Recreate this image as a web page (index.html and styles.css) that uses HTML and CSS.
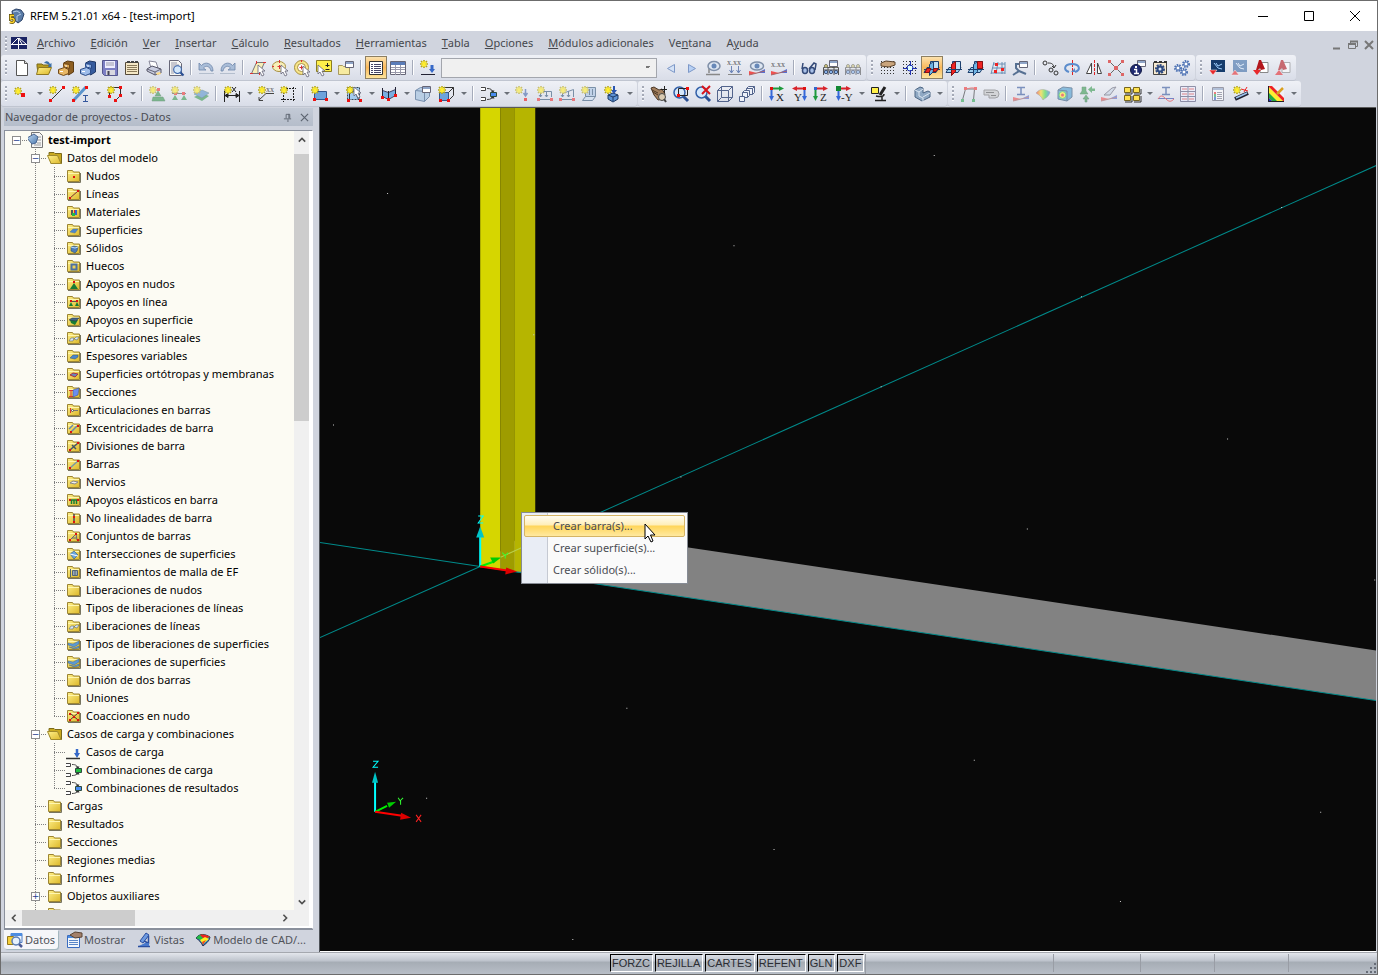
FILE: index.html
```html
<!DOCTYPE html>
<html lang="es">
<head>
<meta charset="utf-8">
<title>RFEM 5.21.01 x64 - [test-import]</title>
<link rel="stylesheet" href="styles.css">
</head>
<body>
<svg class="defs" aria-hidden="true">
  <defs>
    <linearGradient id="gold" x1="0" y1="0" x2="1" y2="1"><stop offset="0" stop-color="#fff08a"/><stop offset="1" stop-color="#dcb82a"/></linearGradient>
    <linearGradient id="steel" x1="0" y1="0" x2="1" y2="1"><stop offset="0" stop-color="#c4dcf4"/><stop offset="1" stop-color="#4a78ae"/></linearGradient>
    <linearGradient id="rainbow" x1="0" y1="0" x2="1" y2="0"><stop offset="0" stop-color="#e33"/><stop offset=".35" stop-color="#fd2"/><stop offset=".65" stop-color="#4d4"/><stop offset="1" stop-color="#37e"/></linearGradient>
    <g id="star"><path d="M4 0v8M0 4h8M1 1l6 6M7 1L1 7" stroke="#b3a41c" stroke-width="1.600"/><path d="M4 1v6M1 4h6M2 2l4 4M6 2L2 6" stroke="#ffee30" stroke-width="1.200"/></g>
    <g id="cursor"><path d="M0 0v9l2-2 2 4 2-1-2-4h3z" fill="#fff" stroke="#667" stroke-width=".8"/></g>
    <g id="win"><path d="M.5.5h8v6h-8z" fill="#fff" stroke="#667"/><path d="M1 1h7v2H1z" fill="#8fa5c8"/></g>
    <g id="lens"><path d="M10 10l5 5" stroke="#2a4f93" stroke-width="3"/><circle cx="6.500" cy="6.500" r="5.500" fill="#d5e8fb" stroke="#3360a8" stroke-width="1.500"/></g>
    <g id="grid"><path d="M1 1.500h15M1 4.500h15M1 7.500h15M1 10.500h15M1 13.500h15" stroke="#333" stroke-dasharray="1 2"/></g>
    <g id="planes"><path d="M3 7.500h12l-3 5H0z" fill="#9fd0f0" stroke="#1c3f6e"/><path d="M6.500 1.500h8v8h-8z" fill="#bfe0f6" stroke="#1c3f6e"/><path d="M5.500 4.500l4-3v10l-4 4z" fill="#6fb4e4" stroke="#1c3f6e"/><path d="M0 9.500h16" stroke="#1c3f6e"/></g>
    <g id="truss"><path d="M.5 15V7.500h15V15M1 10h14M5 8v7M11 8v7" fill="none" stroke="#555"/><circle cx="3" cy="12" r="1.700" fill="#89b4ea" stroke="#457"/><circle cx="8" cy="12" r="1.700" fill="#89b4ea" stroke="#457"/><circle cx="13" cy="12" r="1.700" fill="#89b4ea" stroke="#457"/><circle cx="3" cy="6" r="1.500" fill="#e8d880" stroke="#776"/><circle cx="8" cy="6" r="1.500" fill="#e8d880" stroke="#776"/><circle cx="13" cy="6" r="1.500" fill="#e8d880" stroke="#776"/></g>
    <g id="wedge"><path d="M0 15V11L8 13z" fill="#f05050"/><path d="M8 13l8-4v4z" fill="#5470d8"/><path d="M0 15l16-4" stroke="#a66"/></g>
    <symbol id="folder" viewBox="0 0 16 16"><path d="M1.500 4V2.500h5l1 1.500h6v9.500h-12z" fill="url(#gold)" stroke="#9c8532"/><path d="M2 14.500h12.500V5" fill="none" stroke="#77745f"/><path d="M2 5.500h11" stroke="#fff6ae"/></symbol>
    <symbol id="open" viewBox="0 0 16 16"><path d="M2 4.500V2.500h5l1 1h6.500v10H4z" fill="#c9a91e" stroke="#7b6a1a"/><path d="M.5 5.500h10l3.500 8H4z" fill="url(#gold)" stroke="#a08a2c"/></symbol>
    <symbol id="case" viewBox="0 0 16 16"><path d="M0 14.500h14" stroke="#333" stroke-width="1.500"/><path d="M11 5v5" stroke="#3568c8" stroke-width="2.500"/><path d="M8 9h6l-3 5z" fill="#3568c8"/></symbol>
    <symbol id="combo" viewBox="0 0 16 16"><path d="M-.5 1.500h5v3h-5zM-.5 11.500h5v3h-5z" fill="#fff" stroke="#444"/><path d="M6 2.500c4 0 5 1 6 4M6 13.500c4 0 5-1 6-4" fill="none" stroke="#444"/><path d="M9.500 4.500h4L12 7zM9.500 12.500h4L12 9z" fill="#333"/><path d="M9.500 6.500h6v4h-6z" fill="currentColor" stroke="#2c4a3c"/></symbol>
    <symbol id="model" viewBox="0 0 16 16"><path d="M3.500.500h8l3 3v12h-11z" fill="#f5f5f5" stroke="#777"/><path d="M9 5h4M9 8h4M9 11h4M6 13h7" stroke="#999"/><path d="M-1 6l7-4 4 3-2 6-4 1z" fill="url(#steel)" stroke="#476490"/></symbol>
  </defs>
</svg>

<header class="titlebar">
  <svg class="app" viewBox="0 0 16 16"><path d="M4 3l4-2 5 1 3 4-2 6-4 3-5-4z" fill="#5a7ca8" stroke="#2b4268"/><path d="M5 4l4-1 3 2M9 8l4-2M9 8v5" stroke="#b7cee8" fill="none"/><path d="M6 7.500H2.500V11c3-1 4 0 3.500 2-.5 1.500-2 2-4 1" fill="none" stroke="#5b4d10" stroke-width="3"/><path d="M6 7.500H2.500V11c3-1 4 0 3.500 2-.5 1.500-2 2-4 1" fill="none" stroke="#ffd52c" stroke-width="1.500"/></svg>
  <h1>RFEM 5.21.01 x64 - [test-import]</h1>
  <div class="winbtns">
    <button aria-label="Minimizar"><svg viewBox="0 0 10 10"><path d="M0 5.500h10" stroke="#000"/></svg></button>
    <button aria-label="Maximizar"><svg viewBox="0 0 10 10"><path d="M.5.5h9v9h-9z" fill="none" stroke="#000"/></svg></button>
    <button aria-label="Cerrar"><svg viewBox="0 0 10 10"><path d="M0 0l10 10M10 0L0 10" stroke="#000"/></svg></button>
  </div>
</header>

<nav class="menubar">
  <i class="grip"></i>
  <svg class="doc" viewBox="0 0 16 12"><path d="M0 0h16v12H0z" fill="#1b2464"/><path d="M0 7.500h16M7.500 1v11M7 1L1 7M8 1l7 6M8 2l3 5" stroke="#fff" fill="none"/></svg>
  <button><u>A</u>rchivo</button><button><u>E</u>dición</button><button><u>V</u>er</button><button><u>I</u>nsertar</button><button><u>C</u>álculo</button><button><u>R</u>esultados</button><button><u>H</u>erramientas</button><button><u>T</u>abla</button><button><u>O</u>pciones</button><button><u>M</u>ódulos adicionales</button><button>Ve<u>n</u>tana</button><button>A<u>y</u>uda</button>
  <div class="childbtns">
    <button aria-label="Minimizar documento"><svg viewBox="0 0 10 10"><path d="M1 8.500h7" stroke="#777" stroke-width="2"/></svg></button>
    <button aria-label="Restaurar documento"><svg viewBox="0 0 10 10"><path d="M2.500 3V1.500h7v5H8M.5 3.500h7v5h-7z" fill="none" stroke="#777"/><path d="M0 4h8M2 1.500h8" stroke="#777" stroke-width="2"/></svg></button>
    <button aria-label="Cerrar documento"><svg viewBox="0 0 10 10"><path d="M1 1l8 8M9 1L1 9" stroke="#777" stroke-width="2"/></svg></button>
  </div>
</nav>

<div class="toolrow">
  <div class="toolbar" role="toolbar"><i class="grip"></i>
    <button class="tb" aria-label="Nuevo"><svg viewBox="0 0 16 16"><path d="M2.500.500h8l3 3v12h-11z" fill="#fff" stroke="#555"/><path d="M10.500.500v3h3" fill="#ddd" stroke="#555"/></svg></button>
    <button class="tb" aria-label="Abrir"><svg viewBox="0 0 16 16"><path d="M1 6V4h5l1 1h6v8H2z" fill="#b99d1c" stroke="#7b6a1a"/><path d="M.5 14.500l2-7h13l-3 7z" fill="url(#gold)" stroke="#8f7822"/><path d="M8 3c2-3 5-2 6 1l1.500-1v4H12l1-1.500c-1-2-3-2-5-2.500z" fill="#3d70a8"/></svg></button>
    <button class="tb" aria-label="Archivador"><svg viewBox="0 0 16 16"><path d="M5.500 3l4-2 6 1v10l-5 3z" fill="#8e5f22" stroke="#5c3b12"/><path d="M5 3l5 2v10l-5-2z" fill="#d4a050"/><path d="M.5 9.500l6-2 4 2v4l-5 2-5-2z" fill="#e8b765" stroke="#70491a"/><path d="M5.500 3.500l6 1v4l-6-2z" fill="#dba653" stroke="#70491a"/><path d="M2 11.500h3M7 6h2" stroke="#fff"/></svg></button>
    <button class="tb" aria-label="Gestor de proyectos"><svg viewBox="0 0 16 16"><path d="M5.500 3l4-2 6 1v10l-5 3z" fill="#365b9e" stroke="#203866"/><path d="M5 3l5 2v10l-5-2z" fill="#7ba0dc"/><path d="M.5 9.500l6-2 4 2v4l-5 2-5-2z" fill="#9dbcea" stroke="#2a4a86"/><path d="M5.500 3.500l6 1v4l-6-2z" fill="#84a8e0" stroke="#2a4a86"/><path d="M2 11.500h3M7 6h2" stroke="#fff"/></svg></button>
    <button class="tb" aria-label="Guardar"><svg viewBox="0 0 16 16"><path d="M.5.500h15v15h-13l-2-2z" fill="#7c7fc4" stroke="#55578e"/><path d="M3 1h10v7H3z" fill="#eef"/><path d="M4 3h8M4 5h8" stroke="#99a"/><path d="M4 10h9v5H4z" fill="#d8d8e0"/><path d="M5.500 11h2v4h-2z" fill="#445"/></svg></button>
    <button class="tb" aria-label="Informe"><svg viewBox="0 0 16 16"><path d="M1.500 2.500h13v12h-13z" fill="#f5e8c6" stroke="#554a3a"/><path d="M3 2h3M7 2h3M11 2h3" stroke="#444" stroke-width="2"/><path d="M3 5.500h10M3 7.500h10M3 9.500h10M3 11.500h10" stroke="#8a7a5a"/></svg></button>
    <button class="tb" aria-label="Imprimir"><svg viewBox="0 0 16 16"><path d="M3 1l7 1 2 6H5z" fill="#fff" stroke="#889"/><path d="M1 9l5-3 9 3v4l-6 2-8-4z" fill="#c9cde0" stroke="#556"/><path d="M1 9l8 3 6-3M9 12v3" stroke="#667" fill="none"/><path d="M10 13l4-1 1 2-4 1z" fill="#fd8"/></svg></button>
    <button class="tb" aria-label="Vista preliminar"><svg viewBox="0 0 16 16"><path d="M1.500.500h9l3 3v12h-12z" fill="#f7f7f4" stroke="#667"/><path d="M3 3h6M3 5h8M3 7h4M3 9h3M3 11h3M3 13h3" stroke="#99a"/><g transform="translate(5 5) scale(.7)"><use href="#lens"/></g></svg></button>
    <i class="sep"></i>
    <button class="tb" aria-label="Deshacer"><svg viewBox="0 0 16 16"><path d="M1 3v7h7L5.500 8C8 5 12 6 13 11h2C15 3 7 1 3.500 5.500z" fill="#a9bdd8" stroke="#6d85aa" stroke-width=".8"/><path d="M1 13.500h15" stroke="#b4becd"/></svg></button>
    <button class="tb" aria-label="Rehacer"><svg viewBox="0 0 16 16"><path d="M15 3v7H8l2.500-2C8 5 4 6 3 11H1C1 3 9 1 12.500 5.500z" fill="#a9bdd8" stroke="#6d85aa" stroke-width=".8"/><path d="M0 13.500h15" stroke="#b4becd"/></svg></button>
    <i class="sep"></i>
    <button class="tb" aria-label="Selección paralelogramo"><svg viewBox="0 0 16 16"><path d="M1.500 13.500l5-11h8l-5 11z" fill="#f8efb8" stroke="#777"/><path d="M0 13.500h3M6.500 1v3M13 2.500h3M9.500 12v3" stroke="#d33"/><use href="#cursor" x="8" y="5"/></svg></button>
    <button class="tb" aria-label="Selección elipse"><svg viewBox="0 0 16 16"><ellipse cx="7" cy="6.500" rx="6.500" ry="5" fill="#f8efb8" stroke="#a89040"/><path d="M7.500 5v4M5.500 6.500h4M7.500 0v3M0 6.500h2" stroke="#d33"/><use href="#cursor" x="9" y="5"/></svg></button>
    <button class="tb" aria-label="Selección anillo"><svg viewBox="0 0 16 16"><circle cx="7.500" cy="7.500" r="7" fill="#f8e68a" stroke="#a89040"/><circle cx="7.500" cy="7.500" r="4" fill="#fff" stroke="#a89040"/><path d="M7.500 5.500v4M5.500 7.500h4M7.500 0v2" stroke="#d33"/><use href="#cursor" x="9" y="6"/></svg></button>
    <button class="tb" aria-label="Selección ventana"><svg viewBox="0 0 16 16"><path d="M.5.5h15v11H.5z" fill="#fff04a" stroke="#8c7e20"/><path d="M11.500 3v4M9.500 5.500h4M9.500 9.500h4" stroke="#222"/><use href="#cursor" x="2" y="5"/></svg></button>
    <button class="tb" aria-label="Selección especial"><svg viewBox="0 0 16 16"><path d="M.5 7.500v-2h4l1 1h6v8H.5z" fill="#f7eba0" stroke="#a89a60"/><use href="#win" x="7" y="1"/></svg></button>
    <i class="sep"></i>
    <button class="tb on" aria-label="Navegador"><svg viewBox="0 0 16 16"><path d="M1.500 1.500h13v13h-13z" fill="#fff" stroke="#333"/><path d="M3 4.500h2M3 6.500h2M3 8.500h2M3 10.500h2M3 12.500h2M6 4.500h7M6 6.500h7M6 8.500h7M6 10.500h7M6 12.500h7" stroke="#446"/></svg></button>
    <button class="tb" aria-label="Tablas"><svg viewBox="0 0 16 16"><path d="M.5 1.500h15v13H.5z" fill="#fff" stroke="#667"/><path d="M1 2h14v3H1z" fill="#5a7cb8"/><path d="M5.500 5v10M10.500 5v10M1 7.500h14M1 9.500h14M1 12.500h14" stroke="#99a"/></svg></button>
    <i class="sep"></i>
    <button class="tb" aria-label="Nuevo caso de carga"><svg viewBox="0 0 16 16"><use href="#star"/><path d="M1 14.500h14" stroke="#223"/><path d="M12 5v4" stroke="#3568c8" stroke-width="3"/><path d="M9 9h6l-3 4z" fill="#3568c8"/></svg></button>
    <select class="loadcase" aria-label="Caso de carga"><option></option></select>
    <button class="tb nav" aria-label="Anterior"><svg viewBox="0 0 16 16"><path d="M11.500 4.500v8l-7-4z" fill="#d4e2f6" stroke="#7d98c8"/></svg></button>
    <button class="tb nav" aria-label="Siguiente"><svg viewBox="0 0 16 16"><path d="M4.500 4.500v8l7-4z" fill="#b7d0f4" stroke="#7d98c8"/></svg></button>
    <button class="tb" aria-label="Mostrar cargas"><svg viewBox="0 0 16 16"><path d="M1 14.500h14M4 8v5" stroke="#888" stroke-width="1.500"/><ellipse cx="9" cy="6" rx="6" ry="4.500" fill="#dde6f2" stroke="#7f8fa8" stroke-width="1.500"/><circle cx="9" cy="6" r="2.500" fill="#6788b8"/></svg></button>
    <button class="tb" aria-label="Valores de carga"><svg viewBox="0 0 16 16"><text x="0" y="5" class="tiny">x.xx</text><path d="M1 14.500h14" stroke="#888"/><path d="M4.500 6v7M2.500 10l2 3 2-3M11.500 6v7M9.500 10l2 3 2-3" stroke="#6f86b8" fill="none"/></svg></button>
    <button class="tb" aria-label="Mostrar resultados"><svg viewBox="0 0 16 16"><use href="#wedge"/><ellipse cx="8" cy="6" rx="6.500" ry="4" fill="#dde6f2" stroke="#7f8fa8" stroke-width="1.500"/><circle cx="8" cy="6" r="2.500" fill="#6788b8"/></svg></button>
    <button class="tb" aria-label="Valores de resultados"><svg viewBox="0 0 16 16"><text x="0" y="7" class="tiny">x.xx</text><use href="#wedge"/></svg></button>
    <i class="sep"></i>
    <button class="tb" aria-label="Gafas"><svg viewBox="0 0 16 16"><path d="M2 3L1 9M8 9l5-6 2 1-1 6" stroke="#344a78" stroke-width="1.500" fill="none"/><ellipse cx="4" cy="10.500" rx="2.500" ry="3" fill="#a8c0e8" stroke="#344a78" stroke-width="1.500"/><ellipse cx="11" cy="10.500" rx="2.500" ry="3" fill="#a8c0e8" stroke="#344a78" stroke-width="1.500"/></svg></button>
    <button class="tb" aria-label="Parámetros de cálculo"><svg viewBox="0 0 16 16"><use href="#truss"/><use href="#win" x="6"/></svg></button>
    <button class="tb dim" aria-label="Calcular"><svg viewBox="0 0 16 16"><use href="#truss"/></svg></button>
  </div>
  <div class="toolbar" role="toolbar"><i class="grip"></i>
    <button class="tb" aria-label="Plano de trabajo"><svg viewBox="0 0 16 16"><use href="#grid"/><path d="M1 3l5-2 9 1v3l-6 2-8-1z" fill="#c9a47c" stroke="#59412a"/></svg></button>
    <button class="tb" aria-label="Rejilla"><svg viewBox="0 0 16 16"><use href="#grid"/><circle cx="8" cy="8" r="3" fill="#dff" stroke="#2233b0"/><path d="M8.500 1v5M8.500 10v5M1 8.500h5M10 8.500h5" stroke="#2233b0"/></svg></button>
    <button class="tb on" aria-label="Plano XY"><svg viewBox="0 0 16 16"><use href="#planes"/><path d="M3 8.500h4l-2 4H1zM10 8.500h4l-2 3H9z" fill="#e22" stroke="#8a1010"/></svg></button>
    <button class="tb" aria-label="Plano YZ"><svg viewBox="0 0 16 16"><use href="#planes"/><path d="M5.500 4.500l4-3v10l-4 4z" fill="#e22" stroke="#8a1010"/><path d="M0 9.500h16" stroke="#1c3f6e"/></svg></button>
    <button class="tb" aria-label="Plano XZ"><svg viewBox="0 0 16 16"><use href="#planes"/><path d="M9.500 1.500h5v7h-5z" fill="#e22" stroke="#8a1010"/></svg></button>
    <button class="tb" aria-label="Malla de líneas"><svg viewBox="0 0 16 16"><path d="M4 2L1 14M8 2L6 14M12 2v12M15 2v12M3 4h12M2 8h13M1 13h14" stroke="#6a90b4" fill="none"/><path d="M5 3h3v3H5zM11 8h3v3h-3zM4 10h3v3H4z" fill="#e22"/></svg></button>
    <button class="tb" aria-label="Propiedades"><svg viewBox="0 0 16 16"><use href="#win" x="7" y="1"/><path d="M3 4h4M4 4v4l3 3-6 4M7 11l7 3" stroke="#567092" stroke-width="2" fill="none"/></svg></button>
    <i class="sep"></i>
    <button class="tb" aria-label="Mover o copiar"><svg viewBox="0 0 16 16"><circle cx="3" cy="3" r="2" fill="none" stroke="#333"/><circle cx="9" cy="10" r="2" fill="none" stroke="#333"/><circle cx="14" cy="13" r="2" fill="none" stroke="#333"/><path d="M6 3c4 0 5 1 6 4M10 6l2 2 2-3" fill="none" stroke="#333"/></svg></button>
    <button class="tb" aria-label="Girar"><svg viewBox="0 0 16 16"><path d="M8.500 0v16" stroke="#d22" stroke-dasharray="3 1"/><path d="M5 12C-1 10 0 4 8 4s9 6 3 8" fill="none" stroke="#5b8ccc" stroke-width="2"/><path d="M7 12h4V8z" fill="#5b8ccc"/></svg></button>
    <button class="tb" aria-label="Simetría"><svg viewBox="0 0 16 16"><path d="M8.500 0v16" stroke="#d22" stroke-dasharray="3 1"/><path d="M5.500 3v10.500h-5zM11.500 3v10.500h4z" fill="#fff" stroke="#444"/></svg></button>
    <button class="tb" aria-label="Conectar"><svg viewBox="0 0 16 16"><path d="M2 2l12 12M14 2L2 14" stroke="#666"/><path d="M0 0h3v3H0zM13 0h3v3h-3zM0 13h3v3H0zM13 13h3v3h-3zM6 6h4v4H6z" fill="#d66"/></svg></button>
    <button class="tb" aria-label="Información"><svg viewBox="0 0 16 16"><use href="#win" x="7"/><circle cx="6" cy="10" r="5.500" fill="#1e2a72" stroke="#111844"/><path d="M4 9.500h2.500V14M4 13.500h5" stroke="#fff" stroke-width="1.500" fill="none"/><path d="M5 6h2v2H5z" fill="#fff"/></svg></button>
    <button class="tb" aria-label="Configuración"><svg viewBox="0 0 16 16"><path d="M1.500 2.500h13v12h-13z" fill="#f7ead0" stroke="#444"/><path d="M2 2h3M7 2h3M12 2h3" stroke="#333" stroke-width="2"/><circle cx="8" cy="9" r="4" fill="none" stroke="#2e4a80" stroke-width="2" stroke-dasharray="2 1"/><circle cx="8" cy="9" r="2.500" fill="#dbe6f5" stroke="#2e4a80" stroke-width="2"/></svg></button>
    <button class="tb" aria-label="Opciones"><svg viewBox="0 0 16 16"><g fill="none" stroke="#4d72b4" stroke-width="2" stroke-dasharray="1.500 1"><circle cx="12" cy="4" r="3"/><circle cx="4" cy="8" r="3"/><circle cx="10" cy="12" r="3"/></g><g fill="#fff" stroke="#4d72b4"><circle cx="12" cy="4" r="2"/><circle cx="4" cy="8" r="2"/><circle cx="10" cy="12" r="2"/></g></svg></button>
  </div>
  <div class="toolbar" role="toolbar"><i class="grip"></i>
    <button class="tb" aria-label="Importar RFEM"><svg viewBox="0 0 16 16"><path d="M2 0h14v12H2z" fill="#163c6c"/><path d="M5 3l4 5M7 3l2 3 4-2M9 8l4 1" stroke="#9fd0ff" fill="none"/><path d="M0 10h8l-4 5z" fill="#e8292c" stroke="#fff" stroke-width=".5"/></svg></button>
    <button class="tb dim" aria-label="Exportar RFEM"><svg viewBox="0 0 16 16"><path d="M2 0h14v12H2z" fill="#3d6ca6"/><path d="M5 3l4 5M7 3l2 3 4-2M9 8l4 1" stroke="#def" fill="none"/><path d="M0 15h8l-4-5z" fill="#e8292c" stroke="#fff" stroke-width=".5"/></svg></button>
    <button class="tb" aria-label="Importar CAD"><svg viewBox="0 0 16 16"><path d="M7 2.500h8v10H7z" fill="#fff" stroke="#888"/><path d="M3 10L6 0h2l4 9-4 1-1-2-2 2z" fill="#b3161c"/><path d="M0 10h8l-4 5z" fill="#e8292c"/></svg></button>
    <button class="tb dim" aria-label="Exportar CAD"><svg viewBox="0 0 16 16"><path d="M7 2.500h8v10H7z" fill="#fff" stroke="#888"/><path d="M3 10L6 0h2l4 9-4 1-1-2-2 2z" fill="#b3161c"/><path d="M0 15h8l-4-5z" fill="#e8292c"/></svg></button>
  </div>
</div>

<div class="toolrow">
  <div class="toolbar" role="toolbar"><i class="grip"></i>
    <button class="tb" aria-label="Nuevo nudo"><svg viewBox="0 0 16 16"><use href="#star" y="1"/><path d="M7 7h4v4H7z" fill="#e11"/></svg></button><button class="dd" aria-label="Más nudos"></button>
    <button class="tb" aria-label="Nueva línea"><svg viewBox="0 0 16 16"><path d="M2 14L14 2" stroke="#333"/><path d="M13 0h3v3h-3zM0 13h3v3H0z" fill="#e11"/><use href="#star"/></svg></button>
    <button class="tb w" aria-label="Nueva barra"><svg viewBox="0 0 16 16"><path d="M1 15L14 1" stroke="#5b94cc" stroke-width="3"/><path d="M13 0h3v3h-3zM0 13h3v3H0z" fill="#e11"/><use href="#star"/><path d="M11 9.500h5M11 15.500h5M13.500 10v5" stroke="#34569c"/></svg></button><button class="dd" aria-label="Más barras"></button>
    <button class="tb w" aria-label="Nueva polilínea"><svg viewBox="0 0 16 16"><path d="M2.500 10V1.500h11v8l-5 5" fill="none" stroke="#333"/><path d="M12 0h3v3h-3zM12 8h3v3h-3zM7 13h3v3H7zM1 9h3v3H1z" fill="#e11"/><use href="#star"/></svg></button><button class="dd" aria-label="Más polilíneas"></button>
    <i class="sep"></i>
    <button class="tb dim" aria-label="Apoyo en nudo"><svg viewBox="0 0 16 16"><path d="M9 5l3 5H6zM4 11h10l2 4H3z" fill="#3a9a50" stroke="#286a38" stroke-width=".5"/><path d="M8 2h3v3H8z" fill="#e33"/><use href="#star"/></svg></button>
    <button class="tb dim" aria-label="Apoyo en línea"><svg viewBox="0 0 16 16"><path d="M1 7.500h14" stroke="#555"/><path d="M4 9l3 5H1zM13 9l3 5h-6z" fill="#3a9a50"/><path d="M3 6h3v3H3zM11 6h3v3h-3z" fill="#e33"/><use href="#star"/></svg></button>
    <button class="tb dim" aria-label="Apoyo en superficie"><svg viewBox="0 0 16 16"><path d="M1 11l8-4 7 3-7 5z" fill="#3a9a50"/><path d="M1 8l8-4 7 3-7 5z" fill="#5b94cc" stroke="#366" stroke-width=".5"/><use href="#star"/></svg></button>
    <i class="sep"></i>
    <button class="tb w" aria-label="Acotación"><svg viewBox="0 0 16 16"><path d="M.5 5v11M15.500 5v11M1 9.500h14M1 9.500l3-2v4zM15 9.500l-3-2v4z" stroke="#222" fill="#222"/><path d="M8 1l4 5M12 1L8 6" stroke="#222"/><use href="#star"/></svg></button><button class="dd" aria-label="Más acotaciones"></button>
    <button class="tb" aria-label="Comentario"><svg viewBox="0 0 16 16"><text x="8" y="6" class="tiny">xx</text><path d="M16 7.500H8L1 14M1 11v3.500h4" stroke="#444" fill="none"/><use href="#star"/></svg></button>
    <button class="tb" aria-label="Línea auxiliar"><svg viewBox="0 0 16 16"><path d="M3.500 3v13M13.500 1v15M3 2.500h13M1 13.500h15" stroke="#222" stroke-dasharray="2 1"/><use href="#star"/></svg></button>
    <i class="sep"></i>
    <button class="tb w" aria-label="Nueva superficie"><svg viewBox="0 0 16 16"><path d="M3.500 5.500h12v8h-12z" fill="#6da3dc" stroke="#34588c"/><path d="M2 12h3v3H2zM14 12h3v3h-3z" fill="#e11"/><use href="#star"/></svg></button><button class="dd" aria-label="Más superficies"></button>
    <button class="tb w" aria-label="Superficie por selección"><svg viewBox="0 0 16 16"><path d="M1.500 1.500h12v12h-12z" fill="#a4cbee" stroke="#345" stroke-dasharray="2 1"/><path d="M3.500 13V7.500l5-3 4 9" stroke="#334" fill="none"/><path d="M1 13h3v3H1zM13 13h3v3h-3z" fill="#e11"/><use href="#star"/><use href="#cursor" x="8" y="1"/></svg></button><button class="dd" aria-label="Más opciones"></button>
    <button class="tb w" aria-label="Superficie extruida"><svg viewBox="0 0 16 16"><path d="M1.500 4.500l6 2 7-3v6l-7 4-6-3z" fill="#79aee0" stroke="#446"/><path d="M1.500 2v9M7.500 5v9M14.500 1v9" stroke="#223"/><path d="M0 10h3v3H0zM6 12h3v3H6zM13 8h3v3h-3z" fill="#e11"/></svg></button><button class="dd" aria-label="Más extrusiones"></button>
    <button class="tb" aria-label="Abertura"><svg viewBox="0 0 16 16"><path d="M.5 4.500l5-3h9v9l-5 5-9-2z" fill="#b9cee4" stroke="#7890ae"/><path d="M.5 4.500l9 1v10" fill="none" stroke="#7890ae"/><use href="#win" x="7"/></svg></button>
    <button class="tb w" aria-label="Nuevo sólido"><svg viewBox="0 0 16 16"><path d="M1.500 6.500h9v8h-9z" fill="#6da3dc" stroke="#34588c"/><path d="M1.500 6.500l4-5h10v8l-5 5M10.500 6.500l5-5" fill="none" stroke="#333"/><path d="M1 13h3v3H1zM9 13h3v3H9z" fill="#e11"/><use href="#star"/></svg></button><button class="dd" aria-label="Más sólidos"></button>
    <i class="sep"></i>
    <button class="tb w blue" aria-label="Combinación"><svg><use href="#combo"/></svg></button><button class="dd" aria-label="Más combinaciones"></button>
    <button class="tb dim" aria-label="Carga en nudo"><svg viewBox="0 0 16 16"><path d="M10.500 3v6M8.500 7l2 3 2-3" stroke="#46a" stroke-width="1.500" fill="none"/><path d="M9 12h3v3H9z" fill="#e11"/><use href="#star"/></svg></button>
    <button class="tb dim" aria-label="Carga en barra"><svg viewBox="0 0 16 16"><path d="M1 13.500h14M3.500 11V5.500h11V11M9.500 5v6M2 9l1.500 2L5 9M8 9l1.500 2L11 9" fill="none" stroke="#357"/><path d="M0 12h3v3H0zM13 12h3v3h-3z" fill="#e33"/><use href="#star"/></svg></button>
    <button class="tb dim" aria-label="Carga en línea"><svg viewBox="0 0 16 16"><path d="M1 13.500h14M3.500 11V7.500l11-4V11M9.500 5v6M2 9l1.500 2L5 9M8 9l1.500 2L11 9" fill="none" stroke="#357"/><path d="M0 12h3v3H0zM13 12h3v3h-3z" fill="#e33"/><use href="#star"/></svg></button>
    <button class="tb dim" aria-label="Carga en superficie"><svg viewBox="0 0 16 16"><path d="M4.500 1.500h10v9h-10z" fill="#a9c4e4" stroke="#357"/><path d="M4.500 10.500h10l-3 4h-10zM8.500 3v6M11.500 3v6" fill="#cfe0f2" stroke="#357"/><use href="#star"/></svg></button>
    <button class="tb w" aria-label="Carga en sólido"><svg viewBox="0 0 16 16"><path d="M4 9l5-2 5 2v4l-5 3-5-3z" fill="#5d92d4" stroke="#1d3a66"/><path d="M4 9l5 2 5-2M9 11v4" stroke="#1d3a66" fill="none"/><path d="M10 0v4" stroke="#2a56b0" stroke-width="2"/><path d="M7 4h6l-3 4z" fill="#2a56b0"/><use href="#star"/></svg></button><button class="dd" aria-label="Más cargas"></button>
  </div>
  <div class="toolbar" role="toolbar"><i class="grip"></i>
    <button class="tb" aria-label="Mover vista"><svg viewBox="0 0 16 16"><path d="M0 2l3-1 5 3 3-1 3 5-2 5-5 1-4-5z" fill="#a3805f" stroke="#4c3826"/><path d="M1 4l6 3M2 6l5 3" stroke="#4c3826"/><path d="M13.500 0v7M10 3.500h6" stroke="#222"/><circle cx="11" cy="11" r="3.500" fill="#d9cab2" stroke="#444"/><path d="M13 13l2 3" stroke="#444" stroke-width="2"/></svg></button>
    <button class="tb" aria-label="Zoom ventana"><svg viewBox="0 0 16 16"><use href="#lens"/><path d="M5.500 2.500h9v7h-9z" stroke="#222" fill="none"/><path d="M4 8h3v3H4zM13 1h3v3h-3z" fill="#e11"/></svg></button>
    <button class="tb" aria-label="Ver todo"><svg viewBox="0 0 16 16"><use href="#lens"/><path d="M7 0l8 8M15 0L7 8" stroke="#d8141c" stroke-width="2"/></svg></button>
    <button class="tb" aria-label="Isometría"><svg viewBox="0 0 16 16"><path d="M.5 4.500h11v11H.5zM4.500.500h11v11h-11zM.5 4.500l4-4M11.500 4.500l4-4M11.500 15.500l4-4M.5 15.500l4-4" fill="none" stroke="#53648c"/></svg></button>
    <button class="tb" aria-label="Perspectiva"><svg viewBox="0 0 16 16"><g fill="#eef2fa" stroke="#53648c"><path d="M7.500 2.500l2-2h6v6l-2 2h-6zM7.500 2.500h6v6M13.500 2.500l2-2"/><path d="M3.500 6.500l2-2h5v5l-2 2h-5zM3.500 6.500h5v5"/><path d="M.5 10.500h5v5h-5z"/></g></svg></button>
    <i class="sep"></i>
    <button class="tb" aria-label="Vista X"><svg viewBox="0 0 16 16"><path d="M3 2.500h8" stroke="#1d9a3c" stroke-width="2"/><path d="M10 0l5 2.500L10 5z" fill="#1d9a3c"/><path d="M2.500 3v8" stroke="#3568d8" stroke-width="2"/><path d="M0 10h5l-2.500 5z" fill="#3568d8"/><path d="M1 1h3v3H1z" fill="#d11"/><text x="7" y="15" class="ax">X</text></svg></button>
    <button class="tb" aria-label="Vista Y"><svg viewBox="0 0 16 16"><path d="M5 2.500h8" stroke="#d8242c" stroke-width="2"/><path d="M6 0L1 2.500 6 5z" fill="#d8242c"/><path d="M13.500 3v8" stroke="#3568d8" stroke-width="2"/><path d="M11 10h5l-2.500 5z" fill="#3568d8"/><path d="M12 1h3v3h-3z" fill="#d11"/><text x="3" y="15" class="ax">Y</text></svg></button>
    <button class="tb" aria-label="Vista Z"><svg viewBox="0 0 16 16"><path d="M3 2.500h8" stroke="#d8242c" stroke-width="2"/><path d="M10 0l5 2.500L10 5z" fill="#d8242c"/><path d="M2.500 3v8" stroke="#1d9a3c" stroke-width="2"/><path d="M0 10h5l-2.500 5z" fill="#1d9a3c"/><path d="M1 1h3v3H1z" fill="#36c"/><text x="7" y="15" class="ax">Z</text></svg></button>
    <button class="tb w" aria-label="Vista -Y"><svg viewBox="0 0 16 16"><path d="M3 2.500h8" stroke="#d8242c" stroke-width="2"/><path d="M10 0l5 2.500L10 5z" fill="#d8242c"/><path d="M2.500 3v8" stroke="#3568d8" stroke-width="2"/><path d="M0 10h5l-2.500 5z" fill="#3568d8"/><path d="M0 0h5v5H0z" fill="#183"/><text x="5" y="15" class="ax">-Y</text></svg></button><button class="dd" aria-label="Más vistas"></button>
    <button class="tb w" aria-label="Visibilidad"><svg viewBox="0 0 16 16"><path d="M.5 1.500h7v6h-7z" fill="#fff04a" stroke="#222"/><path d="M14 1l-5 8" stroke="#222" stroke-width="3"/><path d="M5 10c4 1 8 1 8-2M11 10v4M4 14.500h11" stroke="#222" stroke-width="1.500" fill="none"/></svg></button><button class="dd" aria-label="Más visibilidad"></button>
    <i class="sep"></i>
    <button class="tb w" aria-label="Modelo sólido"><svg viewBox="0 0 16 16"><path d="M1 4l5-3 3 1v5l5-2 2 1v5l-8 4-7-4z" fill="#90a9c4" stroke="#4d6684"/><path d="M1 4l4 2v4l4 2v4M5 6l4-3M9 11l7-4" fill="none" stroke="#dbe6f2"/></svg></button><button class="dd" aria-label="Más modelos"></button>
  </div>
  <div class="toolbar" role="toolbar"><i class="grip"></i>
    <button class="tb dim" aria-label="Deformación"><svg viewBox="0 0 16 16"><path d="M1.500 14L4.500 3h9l-1 11" fill="none" stroke="#333"/><path d="M4 2c4 2 6-2 11 1" stroke="#e33" fill="none"/><path d="M3 1h3v3H3zM13 1h3v3h-3z" fill="#e33"/><path d="M0 13h3v3H0zM11 13h3v3h-3z" fill="#3a5"/></svg></button>
    <button class="tb dim" aria-label="Animación"><svg viewBox="0 0 16 16"><path d="M1 4h11q4 0 4 4t-4 4H6V9H1z" fill="#c8c8c8" stroke="#777"/><path d="M3 6.500h8M8 9.500h5" stroke="#555"/></svg></button>
    <i class="sep"></i>
    <button class="tb dim" aria-label="Esfuerzos en barras"><svg viewBox="0 0 16 16"><path d="M4 1.500h8M4 8.500h8M8 2v7" stroke="#34569c" stroke-width="1.500"/><use href="#wedge"/></svg></button>
    <button class="tb dim" aria-label="Resultados en superficies"><svg viewBox="0 0 16 16"><path d="M1 7c4-5 9-4 14-1-1 5-5 6-7 8-2-4-4-5-7-7z" fill="url(#rainbow)" stroke="#777" stroke-width=".5"/></svg></button>
    <button class="tb dim" aria-label="Resultados en sólidos"><svg viewBox="0 0 16 16"><path d="M1 4l5-3 9 1v9l-5 4-9-2z" fill="#4a9ccf" stroke="#357"/><path d="M1 4l9 1v10" fill="none" stroke="#357"/><circle cx="5.500" cy="9" r="3.500" fill="#fe3" stroke="#3c5"/><circle cx="5.500" cy="9" r="1.500" fill="#e33"/></svg></button>
    <button class="tb dim" aria-label="Reacciones"><svg viewBox="0 0 16 16"><path d="M3 1h4v4l2 3H1l2-3zM6 16v-3H4l3-4 3 4H8v3z" fill="#3a9a50" stroke="#286a38" stroke-width=".5"/><path d="M16 2.500h-3V0L9 3.500 13 7V5h3z" fill="#3a9a50"/></svg></button>
    <button class="tb dim" aria-label="Tensiones"><svg viewBox="0 0 16 16"><path d="M3 9l8-7 4-1-6 8z" fill="#c8d4e4" stroke="#667"/><use href="#wedge"/></svg></button>
    <button class="tb w" aria-label="Paneles"><svg viewBox="0 0 16 16"><path d="M1 8h7V3M10 8h7V3M1 16h7v-6M10 16h7v-6" fill="none" stroke="#333"/><g fill="#ffe250" stroke="#77661c"><path d="M.5 1.500h6v5h-6zM9.500 1.500h6v5h-6zM.5 9.500h6v5h-6zM9.500 9.500h6v5h-6z"/></g></svg></button><button class="dd" aria-label="Más paneles"></button>
    <button class="tb dim" aria-label="Diagramas"><svg viewBox="0 0 16 16"><path d="M4 1.500h8M4 8.500h8M8 2v7" stroke="#34569c" stroke-width="1.500"/><path d="M0 12.500h16" stroke="#34a"/><path d="M0 13c3-5 5-3 8 0s5 3 8 0" fill="none" stroke="#e33"/></svg></button>
    <button class="tb dim" aria-label="Tablas de resultados"><svg viewBox="0 0 16 16"><path d="M.5.500h15v15H.5zM1 5.500h14M1 10.500h14M8 1v14" fill="#eef" stroke="#557"/><path d="M2 3h5M9 3h5M2 8h5M9 8h5M2 13h5M9 13h5" stroke="#d44"/></svg></button>
    <i class="sep"></i>
    <button class="tb dim" aria-label="Panel de control"><svg viewBox="0 0 16 16"><path d="M2.500 1.500h11v13h-11z" fill="#fff" stroke="#667"/><path d="M3 2h10v2H3z" fill="#8fa5c8"/><path d="M4 6h2v2H4z" fill="#e33"/><path d="M4 8h2v3H4z" fill="#3a5"/><path d="M4 11h2v3H4z" fill="#36c"/><path d="M7 6.500h5M7 8.500h5M7 10.500h5M7 12.500h5" stroke="#778"/></svg></button>
    <button class="tb w" aria-label="Crear guía"><svg viewBox="0 0 16 16"><path d="M2 13L15 7" stroke="#223" stroke-width="4"/><path d="M3 12l11-5" stroke="#9ec4ee" stroke-width="1.500"/><path d="M8 3l7 2M14 1l-3 5" stroke="#e22"/><use href="#star"/></svg></button><button class="dd" aria-label="Más guías"></button>
    <button class="tb w" aria-label="Escala de colores"><svg viewBox="0 0 16 16"><path d="M0 0h16v16H0z" fill="#eef0f6"/><path d="M0 0l16 16H0z" fill="#ffec30"/><path d="M0 0h4l12 12v4z" fill="#e22"/><path d="M0 6l10 10H5l-5-5z" fill="#2a4"/><path d="M0 11l5 5H0z" fill="#23c"/><path d="M9 8l6-6" stroke="#d9a020" stroke-width="2.500"/><path d="M.5 0v15.500H16" stroke="#222" fill="none"/></svg></button><button class="dd" aria-label="Más escalas"></button>
  </div>
</div>

<main class="work">
  <aside class="navigator">
    <div class="navhead"><h2>Navegador de proyectos - Datos</h2>
      <button aria-label="Fijar"><svg viewBox="0 0 10 10"><path d="M3.500 6V1.500h4V6M6.500 1v5M1 6.500h8M5.500 7v3" fill="none" stroke="#5c6470"/></svg></button>
      <button aria-label="Cerrar panel"><svg viewBox="0 0 10 10"><path d="M1 1l8 8M9 1L1 9" stroke="#5c6470" stroke-width="1.300"/></svg></button>
    </div>
    <div class="treebox">
      <div class="treeview">
        <ul class="tree">
          <li><div class="row root"><button class="exp" aria-label="Contraer">−</button><svg class="ic"><use href="#model"/></svg><b>test-import</b></div>
            <ul class="open">
              <li><div class="row"><button class="exp" aria-label="Contraer">−</button><svg class="ic"><use href="#open"/></svg>Datos del modelo</div>
                <ul>
                  <li class="row"><svg class="ic" viewBox="0 0 16 16"><use href="#folder"/><path d="M7 8h2v2H7z" fill="#d11"/></svg>Nudos</li>
                  <li class="row"><svg class="ic" viewBox="0 0 16 16"><use href="#folder"/><path d="M4 12l8-7" stroke="#733"/><path d="M3 11h2v2H3zM11 4h2v2h-2z" fill="#d11"/></svg>Líneas</li>
                  <li class="row"><svg class="ic" viewBox="0 0 16 16"><use href="#folder"/><path d="M5 6h2v5H5z" fill="#555"/><path d="M8 6h3v5H8z" fill="#36c"/><path d="M6 9h3v3H6z" fill="#2b4"/><path d="M8 6h1v3H8z" fill="#e22"/></svg>Materiales</li>
                  <li class="row"><svg class="ic" viewBox="0 0 16 16"><use href="#folder"/><path d="M4 10l3-3h5l-3 4z" fill="#4b86cc" stroke="#579" stroke-width=".5"/></svg>Superficies</li>
                  <li class="row"><svg class="ic" viewBox="0 0 16 16"><use href="#folder"/><path d="M5 7l3-1 4 1-1 4-2 2-4-2z" fill="#4d7cb8" stroke="#246" stroke-width=".5"/><path d="M5 7l4 1 3-1" stroke="#bdf" fill="none"/></svg>Sólidos</li>
                  <li class="row"><svg class="ic" viewBox="0 0 16 16"><use href="#folder"/><path d="M5.500 6.500h5v5h-5z" fill="#ecd05a" stroke="#4d70a0" stroke-width="2"/></svg>Huecos</li>
                  <li class="row"><svg class="ic" viewBox="0 0 16 16"><use href="#folder"/><path d="M8 7l4 6H4z" fill="#187c34"/><path d="M7 5h2v2H7z" fill="#d11"/></svg>Apoyos en nudos</li>
                  <li class="row"><svg class="ic" viewBox="0 0 16 16"><use href="#folder"/><path d="M4 7.500h8" stroke="#555"/><path d="M5 8l2 4H3zM11 8l2 4H9z" fill="#187c34"/><path d="M4 6h2v2H4zM10 6h2v2h-2z" fill="#d11"/></svg>Apoyos en línea</li>
                  <li class="row"><svg class="ic" viewBox="0 0 16 16"><use href="#folder"/><path d="M4 8h8l-3 5-4-2z" fill="#187c34"/><path d="M3 8l3-2h7l-3 3z" fill="#468" stroke="#234" stroke-width=".5"/></svg>Apoyos en superficie</li>
                  <li class="row"><svg class="ic" viewBox="0 0 16 16"><use href="#folder"/><path d="M3 11l2-3h3l-1 3zM8 9l2-2h3l-2 3z" fill="#dbe8f4" stroke="#456" stroke-width=".5"/></svg>Articulaciones lineales</li>
                  <li class="row"><svg class="ic" viewBox="0 0 16 16"><use href="#folder"/><path d="M4 10l3-3h5v2l-3 2z" fill="#4b86cc" stroke="#357" stroke-width=".5"/></svg>Espesores variables</li>
                  <li class="row"><svg class="ic" viewBox="0 0 16 16"><use href="#folder"/><path d="M4 9l3-2 5 1-3 3z" fill="#68b" stroke="#a34"/></svg>Superficies ortótropas y membranas</li>
                  <li class="row"><svg class="ic" viewBox="0 0 16 16"><use href="#folder"/><path d="M3 6.500h4M3 12.500h4M5 6v6" stroke="#d33"/><path d="M7 6l6-2-1 7-5 2z" fill="#6b8ef0" stroke="#348" stroke-width=".5"/></svg>Secciones</li>
                  <li class="row"><svg class="ic" viewBox="0 0 16 16"><use href="#folder"/><path d="M4 8.500h8" stroke="#777"/><path d="M4.500 6v5" stroke="#d33"/><circle cx="6.500" cy="8.500" r="1" fill="#fff" stroke="#555"/></svg>Articulaciones en barras</li>
                  <li class="row"><svg class="ic" viewBox="0 0 16 16"><use href="#folder"/><path d="M5 12l6-6M3 9l4-4" stroke="#68a" stroke-width="1.500"/><path d="M4 11h2v2H4zM11 5h2v2h-2z" fill="#d11"/></svg>Excentricidades de barra</li>
                  <li class="row"><svg class="ic" viewBox="0 0 16 16"><use href="#folder"/><path d="M4 12l8-7M6 7l4 4" stroke="#456" stroke-width="1.500"/><path d="M3 11h2v2H3zM11 4h2v2h-2z" fill="#d11"/></svg>Divisiones de barra</li>
                  <li class="row"><svg class="ic" viewBox="0 0 16 16"><use href="#folder"/><path d="M4 12l8-7" stroke="#79a" stroke-width="1.500"/><path d="M3 11h2v2H3zM11 4h2v2h-2z" fill="#d11"/></svg>Barras</li>
                  <li class="row"><svg class="ic" viewBox="0 0 16 16"><use href="#folder"/><path d="M4 9l3-2 5 1-3 2z" fill="#eee" stroke="#888"/></svg>Nervios</li>
                  <li class="row"><svg class="ic" viewBox="0 0 16 16"><use href="#folder"/><path d="M4 8h8M5.500 8v4M8 8v4M10.500 8v4" stroke="#187c34" stroke-width="1.500"/><path d="M3 7h2v2H3zM11 7h2v2h-2z" fill="#d11"/></svg>Apoyos elásticos en barra</li>
                  <li class="row"><svg class="ic" viewBox="0 0 16 16"><use href="#folder"/><path d="M8 4v9" stroke="#445" stroke-width="1.500"/><path d="M7 6h2v2H7zM7 11h2v2H7z" fill="#d11"/></svg>No linealidades de barra</li>
                  <li class="row"><svg class="ic" viewBox="0 0 16 16"><use href="#folder"/><path d="M4 12l6-6 1 6M6 10h4" fill="none" stroke="#667"/><path d="M3 11h2v2H3zM9 5h2v2H9zM11 11h2v2h-2z" fill="#d11"/></svg>Conjuntos de barras</li>
                  <li class="row"><svg class="ic" viewBox="0 0 16 16"><use href="#folder"/><path d="M4 8l4-3 4 4-4 4z" fill="#6aa5dc" stroke="#246" stroke-width=".5"/><path d="M4 8l8 2" stroke="#fff"/></svg>Intersecciones de superficies</li>
                  <li class="row"><svg class="ic" viewBox="0 0 16 16"><use href="#folder"/><path d="M4.500 5v8M6.500 6.500h5v5h-5zM9 6v6" fill="#9ab" stroke="#567"/></svg>Refinamientos de malla de EF</li>
                  <li class="row"><svg class="ic"><use href="#folder"/></svg>Liberaciones de nudos</li>
                  <li class="row"><svg class="ic"><use href="#folder"/></svg>Tipos de liberaciones de líneas</li>
                  <li class="row"><svg class="ic" viewBox="0 0 16 16"><use href="#folder"/><path d="M3 11l2-3h3l-1 3zM8 9l2-2h3l-2 3z" fill="#dbe8f4" stroke="#456" stroke-width=".5"/></svg>Liberaciones de líneas</li>
                  <li class="row"><svg class="ic" viewBox="0 0 16 16"><use href="#folder"/><path d="M2 7l5 1 6-3v3l-5 3-6-2zM3 11l5 1 5-2v2l-5 1z" fill="#5b9ad4" stroke="#468" stroke-width=".5"/></svg>Tipos de liberaciones de superficies</li>
                  <li class="row"><svg class="ic" viewBox="0 0 16 16"><use href="#folder"/><path d="M2 7l5 1 6-3v3l-5 3-6-2zM3 11l5 1 5-2v2l-5 1z" fill="#5b9ad4" stroke="#468" stroke-width=".5"/></svg>Liberaciones de superficies</li>
                  <li class="row"><svg class="ic"><use href="#folder"/></svg>Unión de dos barras</li>
                  <li class="row"><svg class="ic"><use href="#folder"/></svg>Uniones</li>
                  <li class="row"><svg class="ic" viewBox="0 0 16 16"><use href="#folder"/><path d="M4 5l8 7M12 5l-8 7" stroke="#433"/><path d="M3 5h2v2H3zM11 4h2v2h-2zM3 11h2v2H3zM11 11h2v2h-2zM7 8h2v2H7z" fill="#d11"/></svg>Coacciones en nudo</li>
                </ul>
              </li>
              <li><div class="row"><button class="exp" aria-label="Contraer">−</button><svg class="ic"><use href="#open"/></svg>Casos de carga y combinaciones</div>
                <ul>
                  <li class="row"><svg class="ic"><use href="#case"/></svg>Casos de carga</li>
                  <li class="row"><svg class="ic green"><use href="#combo"/></svg>Combinaciones de carga</li>
                  <li class="row"><svg class="ic blue"><use href="#combo"/></svg>Combinaciones de resultados</li>
                </ul>
              </li>
              <li class="row"><svg class="ic"><use href="#folder"/></svg>Cargas</li>
              <li class="row"><svg class="ic"><use href="#folder"/></svg>Resultados</li>
              <li class="row"><svg class="ic"><use href="#folder"/></svg>Secciones</li>
              <li class="row"><svg class="ic"><use href="#folder"/></svg>Regiones medias</li>
              <li class="row"><svg class="ic"><use href="#folder"/></svg>Informes</li>
              <li class="row"><button class="exp" aria-label="Expandir">+</button><svg class="ic"><use href="#folder"/></svg>Objetos auxiliares</li>
              <li class="row"><svg class="ic"><use href="#folder"/></svg>Módulos adicionales</li>
            </ul>
          </li>
        </ul>
      </div>
      <div class="vscroll"><button aria-label="Subir"><svg viewBox="0 0 10 10"><path d="M1 7l4-4 4 4" fill="none" stroke="#505050" stroke-width="2"/></svg></button><i class="thumb"></i><button aria-label="Bajar"><svg viewBox="0 0 10 10"><path d="M1 3l4 4 4-4" fill="none" stroke="#505050" stroke-width="2"/></svg></button></div>
      <div class="hscroll"><button aria-label="Izquierda"><svg viewBox="0 0 10 10"><path d="M7 1L3 5l4 4" fill="none" stroke="#505050" stroke-width="2"/></svg></button><i class="thumb"></i><button aria-label="Derecha"><svg viewBox="0 0 10 10"><path d="M3 1l4 4-4 4" fill="none" stroke="#505050" stroke-width="2"/></svg></button></div>
    </div>
    <div class="tabs">
      <button class="tab sel"><svg viewBox="0 0 16 16"><path d="M4 1.500h11v9H4z" fill="#eef4fc" stroke="#4c7cc4"/><path d="M4 1h11v3H4z" fill="#4c8ce0"/><path d="M.5 4.500h6v8h-6z" fill="#f4cf3a" stroke="#94781c"/><circle cx="9" cy="9" r="4" fill="#e6f1fc" stroke="#5a7cb4" stroke-width="1.500"/><path d="M12 12l3 3" stroke="#4a5a94" stroke-width="2.500"/></svg>Datos</button>
      <button class="tab"><svg viewBox="0 0 16 16"><path d="M1.500 3.500h12v12h-12z" fill="#f2f6fc" stroke="#3a6cc0"/><path d="M2 4h11v2H2z" fill="#4c8ce0"/><path d="M3 8.500h9M3 10.500h9M3 12.500h9" stroke="#5a86c8"/><path d="M4 3l5-3 7 1v4L9 6z" fill="#a3806a" stroke="#5a4434"/></svg>Mostrar</button>
      <button class="tab"><svg viewBox="0 0 16 16"><path d="M10 1l3 2-6 8-3-2z" fill="#6d9ae0" stroke="#2a4ea0"/><path d="M12.500 4v8M8 9l4 2M2 14.500h12" stroke="#2a4ea0" stroke-width="1.500"/><path d="M3 14l6-3h4v3z" fill="#4878cc"/></svg>Vistas</button>
      <button class="tab"><svg viewBox="0 0 16 16"><path d="M1 6c4-5 9-4 14-1-1 5-5 7-7 9-2-4-4-6-7-8z" fill="#28c" stroke="#224"/><path d="M1 6c4-5 9-4 14-1l-7 4z" fill="#2b4"/><path d="M5 3c3-1 7 0 10 2l-6 2z" fill="#e22"/><path d="M5 8l5-3 4 2-6 5z" fill="#fe2"/><path d="M7 10l4-2-3 5z" fill="#e42"/></svg>Modelo de CAD/...</button>
    </div>
  </aside>

  <section class="viewport">
    <svg class="scene" viewBox="320 109 1056 842" preserveAspectRatio="xMinYMin slice">
      <path d="M480 567l55-41 153 22 688 103v50z" fill="#828282"/>
      <path d="M480 109h20v461l-20-3z" fill="#d6d600"/><path d="M500 109h14v463l-14-2z" fill="#9e9c00"/><path d="M514 109h21v463h-21z" fill="#b6b500"/>
      <path d="M320 543l160 24 896 134M320 638l160-71" stroke="#008a8a" fill="none"/><path d="M535 542L1376 166" stroke="#008a8a"/><path d="M480 567l55-25" stroke="#b9cf4a"/>
      <path d="M480 567v-30" stroke="#0ff" stroke-width="2"/><path d="M480 527l4 11h-8z" fill="#00c4c8"/>
      <path d="M480 567l14-5" stroke="#0e0" stroke-width="2"/><path d="M501 558l-11 0 3 6z" fill="#0c0"/>
      <path d="M480 567l27 4" stroke="#f00" stroke-width="2"/><path d="M517 572l-11-4-1 7z" fill="#d00"/>
      <path d="M478 516.500h5l-5 7h5" stroke="#0ff" fill="none"/><path d="M502 553l3 3 3-3M505 556v3" stroke="#3f3" fill="none"/>
      <path d="M375 812v-32" stroke="#0ff" stroke-width="2"/><path d="M375 772l3 11h-6z" fill="#00c4c8"/>
      <path d="M375 812l12-6" stroke="#0e0" stroke-width="2"/><path d="M396 802l-9 1 2 5z" fill="#0c0"/>
      <path d="M375 812l27 4" stroke="#f00" stroke-width="2"/><path d="M411 818l-10-5-1 7z" fill="#d00"/>
      <path d="M373 761.500h5l-5 6h5" stroke="#0ff" fill="none"/><path d="M398 798l2 3 3-3M400.500 801v4" stroke="#3f3" fill="none"/><path d="M416 815l5 7M421 815l-5 7" stroke="#f22"/>
      <path d="M387 194.500h1M933 156.500h1M733 246.500h1M333 425.500h1M1226 439.500h1M1026 529.500h1M626 708.500h1M973 760.500h1M773 849.500h1M426 798.500h1M1319 812.500h1M1119 901.500h1M572 939.500h1M1373 580.500h1M1080 297.500h1M880 387.500h1M1280 208.500h1M680 477.500h1M533 335.500h1" stroke="#ccc"/>
    </svg>
    <div class="popup" role="menu">
      <button role="menuitem" class="hot">Crear barra(s)...</button>
      <button role="menuitem">Crear superficie(s)...</button>
      <button role="menuitem">Crear sólido(s)...</button>
    </div>
    <svg class="pointer" viewBox="0 0 12 20"><path d="M1 1v15l3-3 3 6 2-1-2.500-6H11z" fill="#fff" stroke="#000"/></svg>
  </section>
</main>

<footer class="status">
  <div class="modes"><button>FORZC</button><button>REJILLA</button><button>CARTES</button><button>REFENT</button><button>GLN</button><button>DXF</button></div>
  <i class="c1"></i><i class="c2"></i><i class="c3"></i><i class="c3"></i><i class="c4"></i>
  <svg class="sizer" viewBox="0 0 10 10"><path d="M8 0h2v2H8zM4 4h2v2H4zM8 4h2v2H8zM0 8h2v2H0zM4 8h2v2H4zM8 8h2v2H8z" fill="#676d78"/></svg>
</footer>
</body>
</html>
```

FILE: styles.css
```css
* { box-sizing: border-box; }
html, body { height: 100%; }
body {
  margin: 0;
  display: flex;
  flex-direction: column;
  background: #d0d4de;
  border: 1px solid #6c6c6c;
  font: 11px/18px "Noto Sans", "Open Sans", sans-serif;
  color: #000;
  overflow: hidden;
}
button {
  font: inherit;
  color: inherit;
  background: none;
  border: 0;
  padding: 0;
  display: flex;
  align-items: center;
  justify-content: center;
}
svg { display: block; flex: none; overflow: visible; }
.defs { position: absolute; width: 0; height: 0; }

.titlebar { display: flex; align-items: center; height: 30px; background: #fff; padding-left: 7px; flex: none; }
.app { width: 16px; height: 16px; }
.titlebar h1 { margin: 0 0 0 6px; font-size: 11px; font-weight: 400; flex: 1; }
.winbtns { display: flex; }
.winbtns button { width: 46px; height: 30px; padding-left: 2px; }
.winbtns svg { width: 10px; height: 10px; }

.menubar { display: flex; align-items: center; height: 24px; flex: none; color: #45474c; padding-left: 4px; }
.doc { width: 16px; height: 12px; margin: 0 3px 0 2px; }
.menubar > button { padding: 0 8px 0 7px; height: 22px; white-space: pre; }
.childbtns { display: flex; gap: 6px; margin-left: auto; padding: 4px 3px 0 0; }
.childbtns svg { width: 10px; height: 10px; }

.grip {
  width: 4px;
  height: 15px;
  flex: none;
  background: repeating-linear-gradient(#a4a9b6 0 2px, #fafbfd 2px 3px, transparent 3px 4px) 0 0 / 2px 100% no-repeat;
}
.toolrow { display: flex; height: 26px; gap: 1px; flex: none; padding-bottom: 1px; }
.toolbar {
  display: flex;
  align-items: center;
  height: 25px;
  padding: 0 2px 0 4px;
  border-radius: 3px;
  background: linear-gradient(#eff1f6, #e5e8f0 45%, #d9dde8);
  box-shadow: 0 1px 0 #c0c5d0;
}
.toolbar .grip { margin-right: 2px; }
.tb { width: 22px; height: 23px; flex: none; }
.tb svg { width: 16px; height: 16px; }
.tb.w { width: 24px; }
.tb.nav { width: 21px; }
.tb.dim svg { opacity: .6; }
.tb.on { background: linear-gradient(#fce2ae, #fbb85a 50%, #fde49c); border: 1px solid #8d7f62; }
.blue { color: #4a8cf0; }
.green { color: #22c040; }
.dd { width: 11px; height: 23px; flex: none; }
.dd::after { content: ""; border: 3px solid transparent; border-top-color: #6b7078; border-bottom: 0; }
.tb:not(.w) + .dd { width: 13px; }
.sep { width: 8px; height: 15px; flex: none; background: linear-gradient(90deg, #a5abba 50%, #fff 50%) 3px 0 / 2px 100% no-repeat; }
.loadcase {
  width: 216px;
  height: 20px;
  margin: 0 3px 0 2px;
  border: 1px solid #a3a6ad;
  border-radius: 0;
  appearance: none;
  font: inherit;
  background: linear-gradient(45deg, transparent 50%, #777 50%) right 8px center / 3px 3px no-repeat,
    linear-gradient(-45deg, transparent 50%, #777 50%) right 5px center / 3px 3px no-repeat, #f0f0f0;
}
.tiny { font: 8px "Liberation Serif", serif; fill: #555; }
.ax { font: 11px "Liberation Serif", serif; fill: #222; }

.work { display: flex; flex: 1; min-height: 0; padding-right: 1px; }
.navigator { width: 319px; flex: none; display: flex; flex-direction: column; padding: 1px 6px 0 3px; border-right: 1px solid #4e5258; }
.navhead {
  display: flex;
  align-items: center;
  height: 18px;
  flex: none;
  background: linear-gradient(#c3cad6, #b5bdca);
  color: #4a4d55;
}
.navhead h2 { margin: 0; padding-left: 1px; font-size: 11px; font-weight: 400; flex: 1; }
.navhead svg { width: 9px; height: 9px; }
.navhead button { width: 17px; }
.treebox {
  flex: 1;
  min-height: 0;
  margin-top: 4px;
  border: 1px solid #8a909c;
  border-right-color: #fff;
  background: #fff;
  padding-right: 3px;
  padding-bottom: 2px;
  display: grid;
  grid-template: minmax(0, 1fr) 16px / minmax(0, 1fr) 15px;
}
.treeview { overflow: hidden; background: #fcfbf3; white-space: nowrap; }
.tree, .tree ul { list-style: none; margin: 0; padding: 0; }
.tree { padding-left: 7px; }
.tree ul {
  margin-left: 19px;
  background: repeating-linear-gradient(#808080 0 1px, transparent 1px 2px) 4px 0 / 1px calc(100% - 8px) no-repeat;
}
.row { display: flex; align-items: center; height: 18px; padding-left: 16px; position: relative; }
.row::before {
  content: "";
  position: absolute;
  left: 4px;
  top: 9px;
  width: 11px;
  height: 1px;
  background: repeating-linear-gradient(90deg, #808080 0 1px, transparent 1px 2px);
}
.ic { width: 16px; height: 16px; margin-right: 4px; position: relative; }
.exp {
  position: absolute;
  left: 0;
  top: 5px;
  width: 9px;
  height: 9px;
  background: #fff;
  border: 1px solid #8e8e8e;
  color: #24408e;
  font: 9px/7px "DejaVu Sans", sans-serif;
}
.vscroll, .hscroll { display: flex; background: #f0f0f0; }
.vscroll { flex-direction: column; }
.vscroll button { height: 17px; flex: none; }
.vscroll .thumb { height: 267px; margin: 6px 0 auto; background: #cdcdcd; }
.hscroll { grid-column: 1 / 3; }
.hscroll button { width: 17px; flex: none; }
.hscroll .thumb { width: 113px; margin-right: auto; background: #cdcdcd; }
.hscroll button:last-child { margin-right: 16px; }
.vscroll svg, .hscroll svg { width: 8px; height: 8px; }
.tabs { display: flex; height: 23px; flex: none; gap: 5px; color: #50535a; border-top: 1px solid #8a909c; }
.tab { height: 19px; padding: 0 3px; gap: 2px; white-space: nowrap; }
.tab svg { width: 16px; height: 16px; }
.tab.sel { background: #f5f6f9; border-radius: 0 0 3px 3px; box-shadow: 1px 1px 1px #9fb4bc; }

.viewport {
  flex: 1;
  position: relative;
  margin: 1px 0;
  background: #090909;
  box-shadow: 0 -1px #5a5a5a, 0 1px #fff;
}
.scene { width: 100%; height: 100%; overflow: hidden; }
.popup {
  position: absolute;
  left: 201px;
  top: 404px;
  width: 167px;
  padding: 2px;
  background: linear-gradient(90deg, #e9edf5 25px, #c5c9d2 25px 26px, #fafafa 26px);
  border: 1px solid #868b94;
  color: #4a4c52;
}
.popup button { width: 100%; height: 22px; padding-left: 29px; justify-content: flex-start; }
.popup .hot {
  padding-left: 28px;
  border: 1px solid #d5b464;
  border-radius: 2px;
  background: linear-gradient(#fffdf3, #ffeeb8 45%, #ffd559 50%, #ffe9a0);
}
.pointer { position: absolute; left: 324px; top: 415px; width: 12px; height: 20px; }

.status {
  display: flex;
  height: 22px;
  flex: none;
  position: relative;
  border-top: 1px solid #a5a8af;
  background: linear-gradient(#e3e6ec, #c1c6cf 35%, #a6adb5 45%, #b8bec7);
  padding-top: 1px;
}
.modes { display: flex; gap: 2px; margin-left: 609px; border-right: 1px solid #989ca4; padding-right: 1px; font: 11px/16px "Liberation Sans", sans-serif; color: #2b2d33; }
.modes button { height: 18px; padding: 0 2px 0 1px; border: 1px solid #fff; border-top-color: #000; border-left-color: #000; white-space: nowrap; }
.status i { border-right: 1px solid #999da5; height: 18px; }
.c1 { flex: 190; }
.c2 { flex: 88; }
.c3 { flex: 74; }
.status .c4 { flex: 90; border: 0; }
.sizer { position: absolute; right: 1px; bottom: 1px; width: 10px; height: 10px; }
```
